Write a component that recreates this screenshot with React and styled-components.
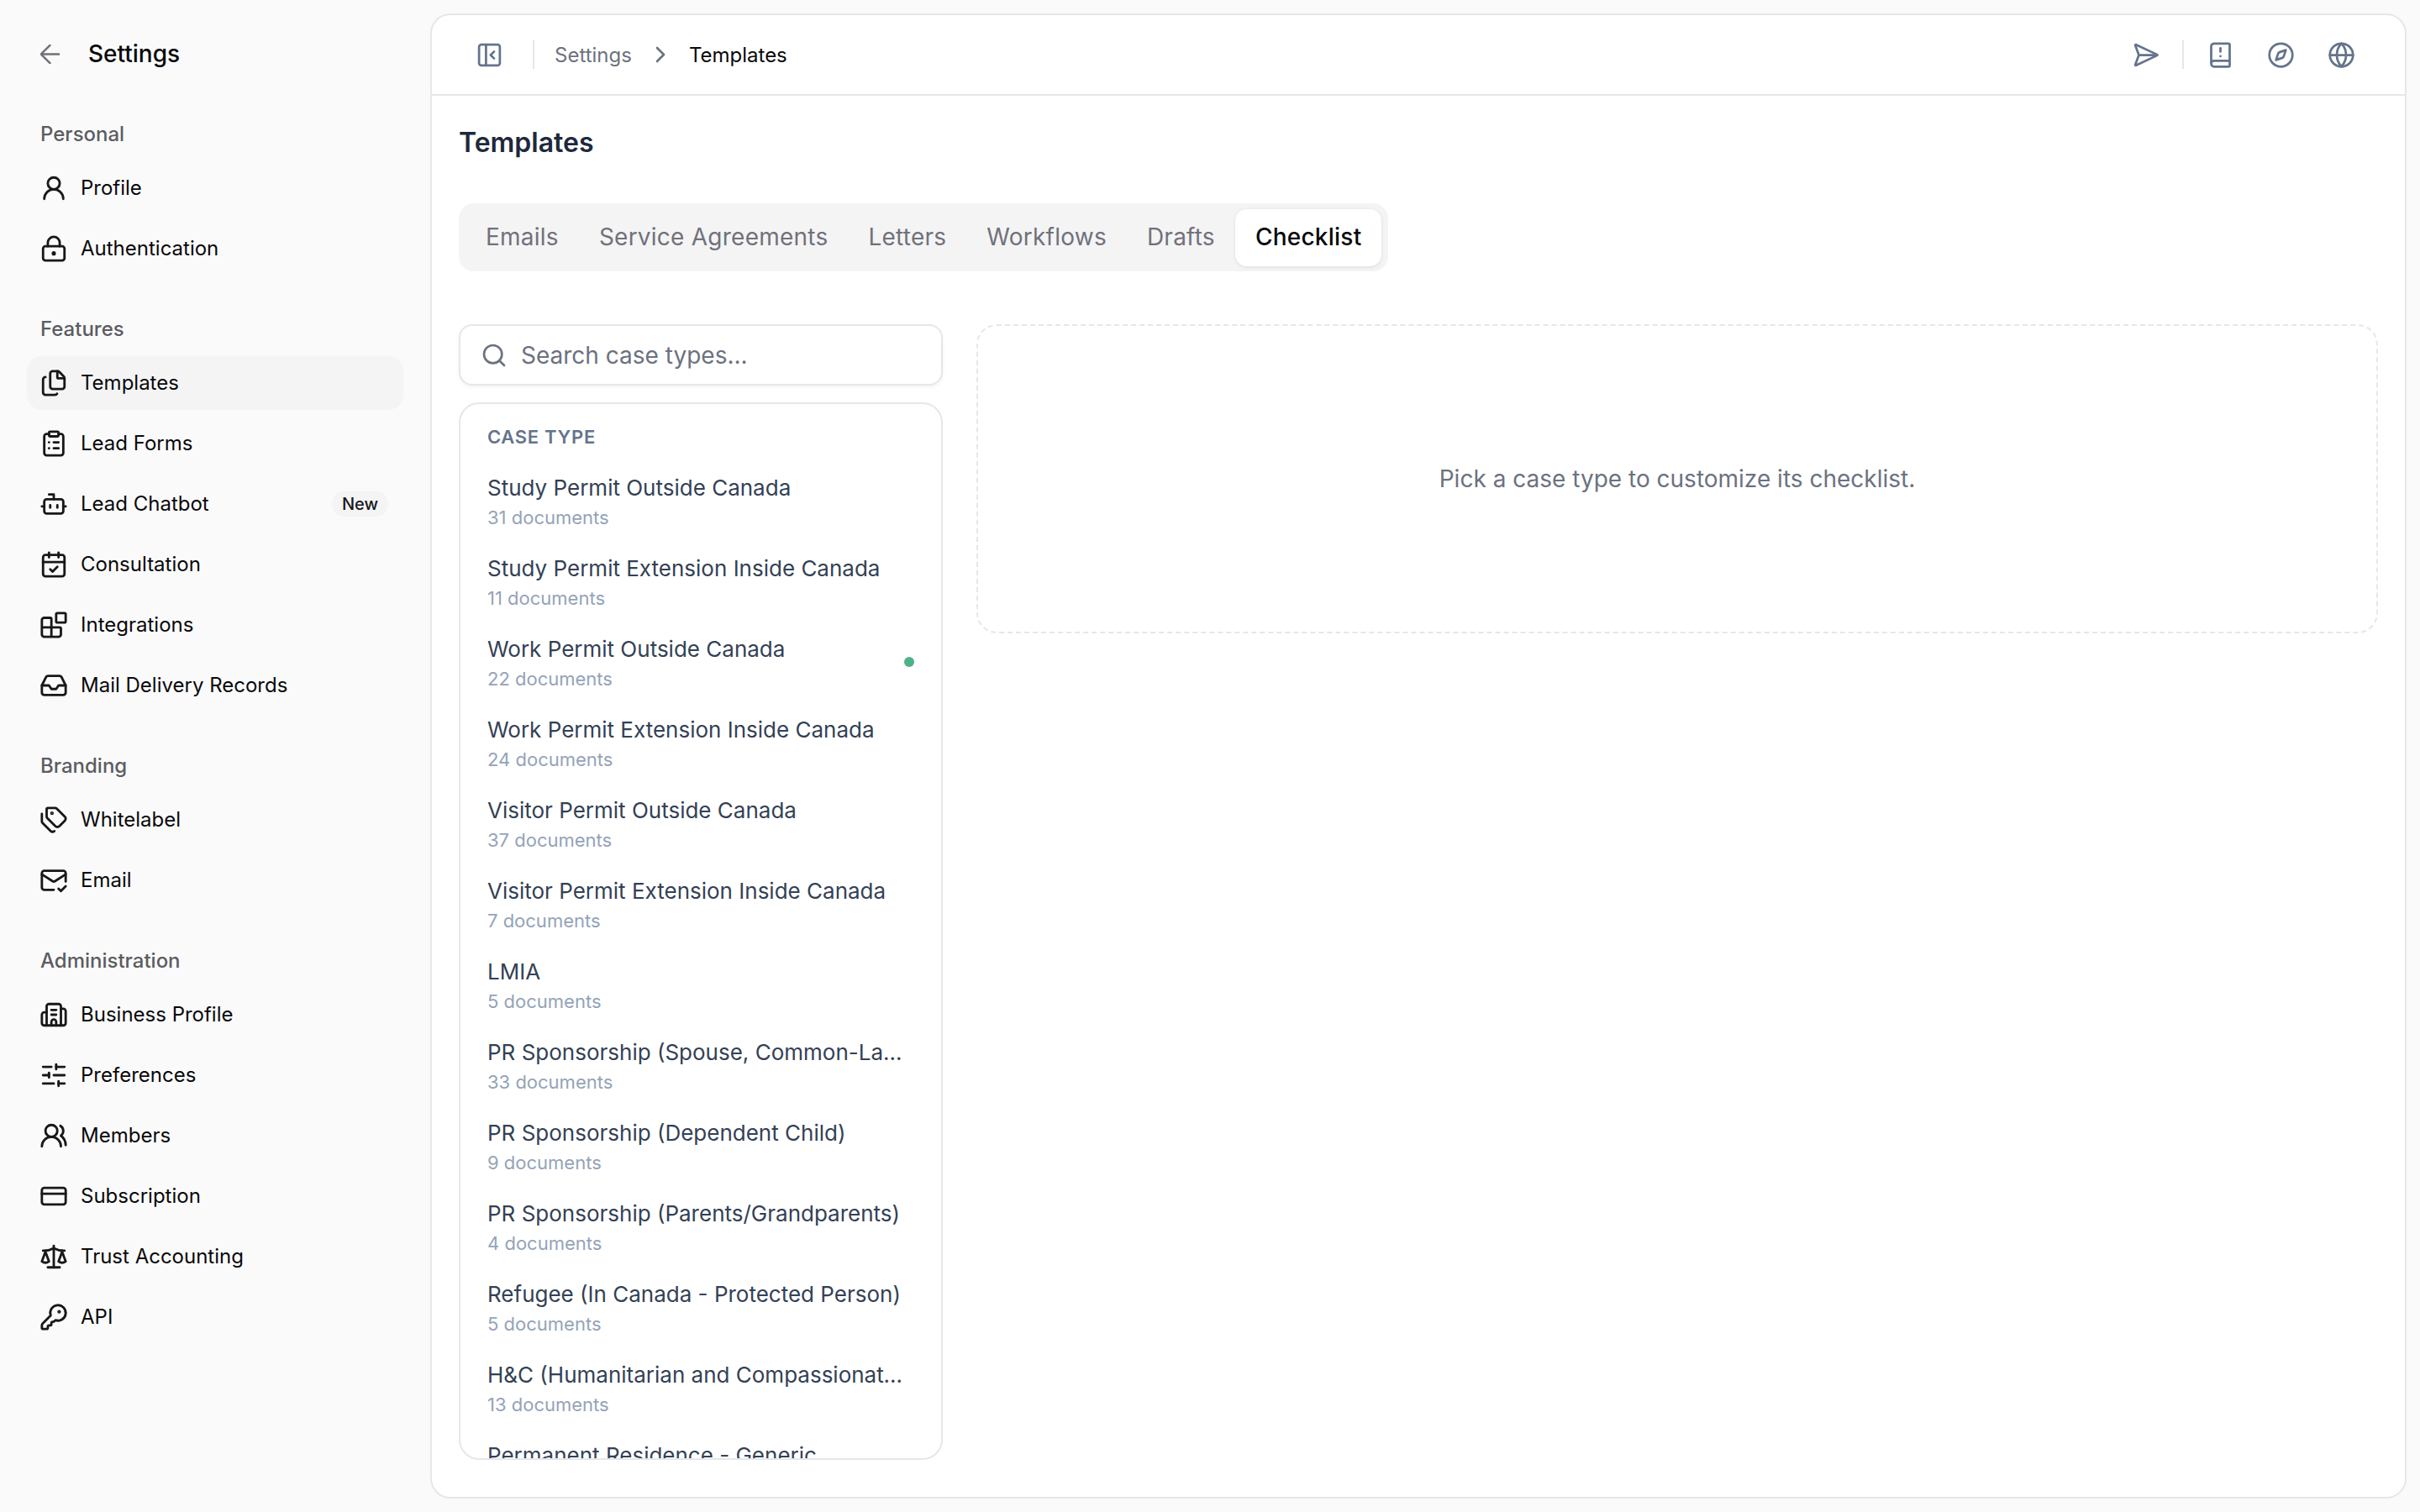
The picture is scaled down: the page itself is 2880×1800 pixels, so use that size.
import React from "react";
import styled, { createGlobalStyle } from "styled-components";
import {
  UserRound, Files, ClipboardList, Bot, CalendarCheck, Blocks, Inbox, Tags, MailCheck,
  Building2, SlidersHorizontal, UsersRound, CreditCard, Scale, KeyRound, PanelLeftClose,
  ChevronRight, SendHorizontal, BookAlert, Compass, Globe, Search,
} from "lucide-react";

const Global = createGlobalStyle`
  html, body { margin: 0; padding: 0; background: #fafafa; }
  body { font-family: Inter, "Noto Sans", sans-serif; -webkit-font-smoothing: antialiased; }
  * { box-sizing: border-box; }
`;

const Shell = styled.div`
  display: flex;
  height: 100vh;
  background: #fafafa;
  overflow: hidden;
`;
const Sidebar = styled.aside`
  flex: none;
  width: 512px;
  padding: 0 32px;
`;
const SideHead = styled.div`
  height: 128px;
  padding-left: 16px;
  margin-bottom: 16px;
  display: flex;
  align-items: center;
  gap: 34px;
  color: #09090b;
  font-size: 28px;
  font-weight: 500;
`;
const Group = styled.section`
  margin-bottom: 48px;
`;
const GroupLabel = styled.div`
  height: 32px;
  line-height: 32px;
  padding-left: 16px;
  margin-bottom: 16px;
  font-size: 24px;
  font-weight: 500;
  color: #5c5c63;
`;
const NavRow = styled.div`
  display: flex;
  align-items: center;
  gap: 16px;
  height: 64px;
  margin-bottom: 8px;
  padding: 0 16px;
  border-radius: 18px;
  font-size: 24px;
  color: #09090b;
  background: ${(p) => (p.$active ? "#f4f4f5" : "transparent")};
  &:last-child { margin-bottom: 0; }
`;
const NavIcon = styled.span`
  flex: none;
  width: 32px;
  height: 32px;
  display: flex;
  align-items: center;
  justify-content: center;
  color: #18181b;
  svg { flex: none; }
`;
const NavText = styled.span`
  flex: 1;
  padding-bottom: 2px;
`;
const NewPill = styled.span`
  flex: none;
  height: 30px;
  line-height: 30px;
  padding: 0 12px;
  margin-right: 2px;
  border-radius: 15px;
  background: #f4f4f5;
  font-size: 20px;
  font-weight: 500;
  color: #18181b;
`;
const Panel = styled.main`
  flex: 1;
  min-width: 0;
  margin: 16px 16px 16px 0;
  display: flex;
  flex-direction: column;
  background: #fff;
  border: 2px solid #e5e7eb;
  border-radius: 24px;
  overflow: hidden;
`;
const TopBar = styled.header`
  flex: none;
  height: 96px;
  padding: 0 59px 0 52px;
  display: flex;
  align-items: center;
  border-bottom: 2px solid #e5e7eb;
`;
const Crumbs = styled.nav`
  flex: 1;
  display: flex;
  align-items: center;
  gap: 18px;
  font-size: 24px;
  color: #6b7280;
`;
const Rule = styled.span`
  flex: none;
  width: 2px;
  height: 34px;
  background: #e5e7eb;
  margin: ${(p) => p.$margin || 0};
`;
const Current = styled.span`
  color: #09090b;
`;
const Actions = styled.div`
  display: flex;
  align-items: center;
  gap: 39px;
  color: #64748b;
`;
const ActionGroup = styled.div`
  display: flex;
  align-items: center;
  gap: 27px;
`;
const Body = styled.div`
  flex: 1;
  min-height: 0;
  padding: 34px 32px 44px;
  display: flex;
  flex-direction: column;
`;
const Title = styled.h1`
  margin: 0 0 50px;
  height: 44px;
  line-height: 44px;
  font-size: 32px;
  font-weight: 600;
  color: #1e293b;
`;
const Tabs = styled.div`
  align-self: flex-start;
  display: flex;
  align-items: center;
  height: 81px;
  padding: 0 8px;
  margin-bottom: 63px;
  border-radius: 18px;
  background: #f4f4f5;
`;
const Tab = styled.div`
  height: 68px;
  line-height: 66px;
  padding: 0 24px;
  border-radius: 14px;
  font-size: 28px;
  letter-spacing: 0.24px;
  color: ${(p) => (p.$active ? "#09090b" : "#71717a")};
  font-weight: ${(p) => (p.$active ? 500 : 400)};
  background: ${(p) => (p.$active ? "#fff" : "transparent")};
  box-shadow: ${(p) => (p.$active ? "0 1px 4px rgba(0,0,0,.1)" : "none")};
`;
const Columns = styled.div`
  flex: 1;
  min-height: 0;
  display: flex;
  gap: 40px;
  align-items: stretch;
`;
const Left = styled.div`
  flex: none;
  width: 576px;
  display: flex;
  flex-direction: column;
  gap: 20px;
`;
const SearchBox = styled.div`
  flex: none;
  height: 73px;
  padding: 0 24px;
  display: flex;
  align-items: center;
  gap: 16px;
  border: 2px solid #e5e7eb;
  border-radius: 16px;
  background: #fff;
  box-shadow: 0 2px 4px rgba(0,0,0,.05);
  color: #6b7280;
`;
const SearchInput = styled.input`
  flex: 1;
  min-width: 0;
  border: 0;
  outline: 0;
  padding: 0;
  background: transparent;
  font: 400 28px Inter, sans-serif;
  &::placeholder { color: #6b7280; opacity: 1; }
`;
const ListCard = styled.div`
  flex: 1;
  min-height: 0;
  overflow: hidden;
  border: 2px solid #e5e7eb;
  border-radius: 24px;
  background: #fff;
  padding-top: 24px;
`;
const ListHead = styled.div`
  height: 30px;
  line-height: 30px;
  margin: 0 32px 13px;
  font-size: 22px;
  font-weight: 600;
  letter-spacing: 0.7px;
  color: #64748b;
`;
const CaseRow = styled.div`
  display: flex;
  align-items: center;
  justify-content: space-between;
  height: 96px;
  padding: 0 32px;
`;
const CaseText = styled.div`
  flex: 1;
  min-width: 0;
  padding-right: 14px;
`;
const CaseName = styled.div`
  height: 40px;
  line-height: 42px;
  font-size: 26px;
  color: #334155;
  white-space: nowrap;
  overflow: hidden;
  text-overflow: ellipsis;
`;
const CaseCount = styled.div`
  height: 32px;
  line-height: 32px;
  font-size: 22px;
  color: #94a3b8;
`;
const Dot = styled.span`
  flex: none;
  width: 12px;
  height: 12px;
  border-radius: 50%;
  background: #4fb286;
`;
const Empty = styled.div`
  flex: 1;
  min-width: 0;
  align-self: flex-start;
  height: 368px;
  display: flex;
  align-items: center;
  justify-content: center;
  border: 2px dashed #e5e7eb;
  border-radius: 24px;
  font-size: 28px;
  color: #6b7280;
`;

const LockIcon = () => (
  <svg width="34" height="34" viewBox="0 0 24 24" fill="none" stroke="currentColor" strokeWidth="2" strokeLinecap="round" strokeLinejoin="round">
    <rect x="3" y="10" width="18" height="12" rx="2" />
    <path d="M7 10V7a5 5 0 0 1 10 0v3" />
    <circle cx="12" cy="16" r="0.8" fill="currentColor" />
  </svg>
);
const BackArrow = () => (
  <svg width="23" height="23" viewBox="5 5 14 14" fill="none" stroke="#71717a" strokeWidth="1.5" strokeLinecap="round" strokeLinejoin="round">
    <path d="M19 12H5.5M12 5.5 5.5 12l6.5 6.5" />
  </svg>
);

const S = 34;
const T = 33;
const groups = [
  ["Personal", [["Profile", <UserRound size={S} />], ["Authentication", <LockIcon />]]],
  ["Features", [
    ["Templates", <Files size={S} />, "active"],
    ["Lead Forms", <ClipboardList size={S} />],
    ["Lead Chatbot", <Bot size={S} />, "new"],
    ["Consultation", <CalendarCheck size={S} />],
    ["Integrations", <Blocks size={S} />],
    ["Mail Delivery Records", <Inbox size={S} />],
  ]],
  ["Branding", [["Whitelabel", <Tags size={S} />], ["Email", <MailCheck size={S} />]]],
  ["Administration", [
    ["Business Profile", <Building2 size={S} />],
    ["Preferences", <SlidersHorizontal size={S} />],
    ["Members", <UsersRound size={S} />],
    ["Subscription", <CreditCard size={S} />],
    ["Trust Accounting", <Scale size={S} />],
    ["API", <KeyRound size={S} />],
  ]],
];

const cases = [
  ["Study Permit Outside Canada", 31],
  ["Study Permit Extension Inside Canada", 11],
  ["Work Permit Outside Canada", 22, true],
  ["Work Permit Extension Inside Canada", 24],
  ["Visitor Permit Outside Canada", 37],
  ["Visitor Permit Extension Inside Canada", 7],
  ["LMIA", 5],
  ["PR Sponsorship (Spouse, Common-Law Partner)", 33],
  ["PR Sponsorship (Dependent Child)", 9],
  ["PR Sponsorship (Parents/Grandparents)", 4],
  ["Refugee (In Canada - Protected Person)", 5],
  ["H&C (Humanitarian and Compassionate Grounds)", 13],
  ["Permanent Residence - Generic", 12],
];

const tabs = ["Emails", "Service Agreements", "Letters", "Workflows", "Drafts", "Checklist"];

export default function App() {
  return (
    <Shell>
      <Global />
      <Sidebar>
        <SideHead><BackArrow /><span>Settings</span></SideHead>
        {groups.map(([label, items]) => (
          <Group key={label}>
            <GroupLabel>{label}</GroupLabel>
            {items.map(([name, icon, flag]) => (
              <NavRow key={name} $active={flag === "active"}>
                <NavIcon>{icon}</NavIcon>
                <NavText>{name}</NavText>
                {flag === "new" && <NewPill>New</NewPill>}
              </NavRow>
            ))}
          </Group>
        ))}
      </Sidebar>
      <Panel>
        <TopBar>
          <Crumbs>
            <PanelLeftClose size={T} color="#64748b" />
            <Rule $margin="0 6px 0 17px" />
            <span>Settings</span>
            <ChevronRight size={32} />
            <Current>Templates</Current>
          </Crumbs>
          <Actions>
            <ActionGroup>
              <SendHorizontal size={T} />
              <Rule />
              <BookAlert size={T} />
            </ActionGroup>
            <Compass size={T} />
            <Globe size={T} />
          </Actions>
        </TopBar>
        <Body>
          <Title>Templates</Title>
          <Tabs>
            {tabs.map((t) => <Tab key={t} $active={t === "Checklist"}>{t}</Tab>)}
          </Tabs>
          <Columns>
            <Left>
              <SearchBox>
                <Search size={32} />
                <SearchInput placeholder="Search case types..." readOnly />
              </SearchBox>
              <ListCard>
                <ListHead>CASE TYPE</ListHead>
                {cases.map(([name, n, dot]) => (
                  <CaseRow key={name}>
                    <CaseText>
                      <CaseName>{name}</CaseName>
                      <CaseCount>{n} documents</CaseCount>
                    </CaseText>
                    {dot && <Dot />}
                  </CaseRow>
                ))}
              </ListCard>
            </Left>
            <Empty>Pick a case type to customize its checklist.</Empty>
          </Columns>
        </Body>
      </Panel>
    </Shell>
  );
}
